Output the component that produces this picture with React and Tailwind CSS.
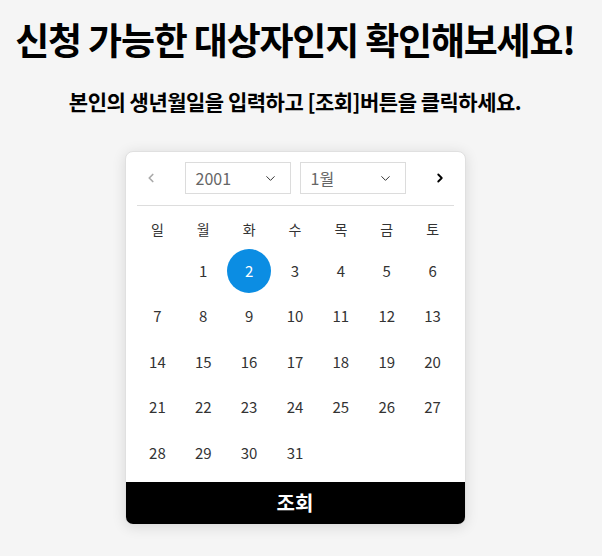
import { ChevronDown, ChevronLeft, ChevronRight } from "lucide-react";

const WEEKDAYS = ["일", "월", "화", "수", "목", "금", "토"];

// 2001년 1월: 1일이 월요일
function buildDays() {
  const cells = [null];
  for (let d = 1; d <= 31; d++) cells.push(d);
  return cells;
}

function Select({ value }) {
  return (
    <div className="flex h-[32px] w-[106px] items-center justify-between border border-[#dcdcdc] bg-white pl-[10px] pr-[12px] text-[16px] text-[#666]">
      <span>{value}</span>
      <ChevronDown size={15} strokeWidth={1.6} className="text-[#333]" />
    </div>
  );
}

export default function App() {
  const days = buildDays();
  const selected = 2;

  return (
    <div
      className="flex min-h-[556px] flex-col items-center bg-[#f5f5f5] pr-[12px] text-black"
      style={{ fontFamily: '"Noto Sans CJK KR", "Noto Sans", sans-serif' }}
    >
      <h1 className="mt-[12px] whitespace-nowrap text-[37px] font-bold leading-[54px] tracking-[-1.2px]">
        신청 가능한 대상자인지 확인해보세요!
      </h1>
      <p className="mt-[20px] whitespace-nowrap text-[21px] font-bold leading-[30px] tracking-[-0.5px]">
        본인의 생년월일을 입력하고 [조회]버튼을 클릭하세요.
      </p>

      <div className="mt-[35px] w-[341px] overflow-hidden rounded-[8px] border border-[#e0e0e0] bg-white shadow-[0_2px_14px_rgba(0,0,0,0.12)]">
        <div className="px-[11px] pt-[10px]">
          <div className="flex items-center">
            <button className="flex w-[28px] justify-center text-[#aaa]">
              <ChevronLeft size={14} strokeWidth={3} />
            </button>
            <div className="flex flex-1 justify-center gap-[9px]">
              <Select value="2001" />
              <Select value="1월" />
            </div>
            <button className="flex w-[28px] justify-center text-black">
              <ChevronRight size={14} strokeWidth={3.2} />
            </button>
          </div>
          <div className="mt-[11px] border-t border-[#ddd]" />
        </div>

        <div className="grid grid-cols-7 px-[9px] pb-[6px] text-[#333]">
          {WEEKDAYS.map((w) => (
            <div key={w} className="flex h-[42px] items-center justify-center pt-[4px] text-[14px]">
              {w}
            </div>
          ))}
          {days.map((d, i) => (
            <div key={i} className="flex h-[45.5px] items-center justify-center">
              {d &&
                (d === selected ? (
                  <span className="flex h-[44px] w-[44px] items-center justify-center rounded-full bg-[#0b8de3] text-[15px] text-white">
                    {d}
                  </span>
                ) : (
                  <span className="text-[15px]">{d}</span>
                ))}
            </div>
          ))}
        </div>

        <button className="flex h-[42px] w-full items-center justify-center bg-black text-[20px] font-bold text-white">
          조회
        </button>
      </div>
    </div>
  );
}
